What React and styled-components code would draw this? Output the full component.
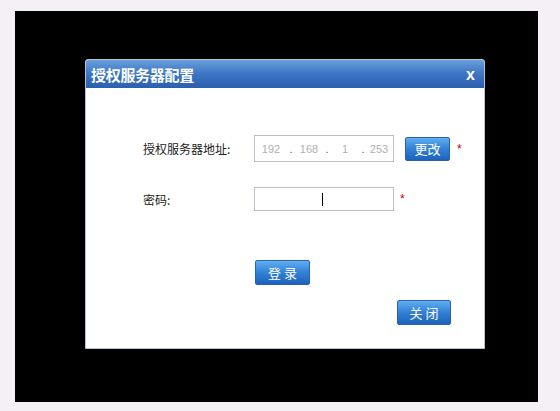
import React from 'react'
import styled, { createGlobalStyle } from 'styled-components'

const GlobalStyle = createGlobalStyle`
  html, body {
    margin: 0;
    padding: 0;
    background: #f5f0f5;
  }
  body {
    font-family: "Noto Sans CJK SC", "Liberation Sans", sans-serif;
  }
`

const Stage = styled.div`
  background: #000;
  box-sizing: border-box;
  height: 391px;
  margin: 11px 0 0 15px;
  padding: 48px 0 0 70px;
  width: 523px;
`

const Dialog = styled.div`
  background: #fff;
  border: 1px solid #b6c2d2;
  border-radius: 3px 3px 0 0;
  box-sizing: border-box;
  display: flex;
  flex-direction: column;
  height: 290px;
  overflow: hidden;
  width: 400px;
`

const TitleBar = styled.div`
  align-items: center;
  background: linear-gradient(to bottom, #6a9fdc 0%, #3f78c6 45%, #2a5fae 100%);
  color: #fff;
  display: flex;
  flex-shrink: 0;
  height: 28px;
  justify-content: space-between;
  padding: 0 9px 0 5px;
`

const Title = styled.span`
  font-size: 15px;
  font-weight: bold;
  letter-spacing: -0.3px;
`

const CloseX = styled.span`
  font-family: "Liberation Sans", sans-serif;
  font-size: 16px;
  font-weight: 900;
  line-height: 1;
  margin-top: 1px;
`

const Body = styled.div`
  display: flex;
  flex: 1;
  flex-direction: column;
  padding: 47px 0 0 57px;
`

const Row = styled.div`
  align-items: center;
  display: flex;
  margin-bottom: ${({ gap }) => gap}px;
`

const Label = styled.span`
  color: #222;
  font-size: 12px;
  width: 111px;
`

const Field = styled.div`
  align-items: center;
  border: 1px solid #b9bfc6;
  box-sizing: border-box;
  display: flex;
  height: ${({ h }) => h}px;
  position: relative;
  width: 140px;
`

const Segment = styled.span`
  color: #b0b0b0;
  font-family: "Liberation Sans", sans-serif;
  font-size: 11px;
  text-align: center;
  width: ${({ w }) => w}px;
`

const Dot = styled.span`
  color: #555;
  font-family: "Liberation Sans", sans-serif;
  font-size: 11px;
  text-align: center;
  width: 8px;
`

const Caret = styled.span`
  background: #000;
  height: 13px;
  left: 67px;
  position: absolute;
  top: 5px;
  width: 1px;
`

const Button = styled.button`
  background: linear-gradient(to bottom, #61aef0 0%, #3584d8 45%, #1d63bb 100%);
  border: 1px solid #2a62ad;
  border-radius: 2px;
  box-sizing: border-box;
  color: #fff;
  font-family: "Noto Sans CJK SC", sans-serif;
  font-size: 13px;
  height: ${({ h }) => h || 25}px;
  letter-spacing: ${({ spread }) => spread ? '3px' : '0'};
  margin-left: ${({ ml }) => ml || 0}px;
  padding: 0;
  text-indent: ${({ spread }) => spread ? '3px' : '0'};
  width: ${({ w }) => w}px;
`

const Star = styled.span`
  color: #c00;
  font-family: "Liberation Sans", sans-serif;
  font-size: 12px;
  margin-left: ${({ ml }) => ml}px;
`

const Footer = styled.div`
  display: flex;
  flex-direction: column;
  margin-left: 112px;
`

const CloseRow = styled.div`
  display: flex;
  justify-content: flex-end;
  margin: 15px 33px 0 0;
`

const App = () => (
  <>
    <GlobalStyle />
    <Stage>
      <Dialog>
        <TitleBar>
          <Title>授权服务器配置</Title>
          <CloseX>x</CloseX>
        </TitleBar>
        <Body>
          <Row gap={25}>
            <Label>授权服务器地址:</Label>
            <Field h={27}>
              <Segment w={32}>192</Segment>
              <Dot>.</Dot>
              <Segment w={28}>168</Segment>
              <Dot>.</Dot>
              <Segment w={28}>1</Segment>
              <Dot>.</Dot>
              <Segment w={24}>253</Segment>
            </Field>
            <Button w={45} h={24} ml={11}>更改</Button>
            <Star ml={7}>*</Star>
          </Row>
          <Row gap={48}>
            <Label>密码:</Label>
            <Field h={24}>
              <Caret />
            </Field>
            <Star ml={6}>*</Star>
          </Row>
          <Footer>
            <div>
              <Button w={55} spread>登录</Button>
            </div>
          </Footer>
          <CloseRow>
            <Button w={54} spread>关闭</Button>
          </CloseRow>
        </Body>
      </Dialog>
    </Stage>
  </>
)

export default App
